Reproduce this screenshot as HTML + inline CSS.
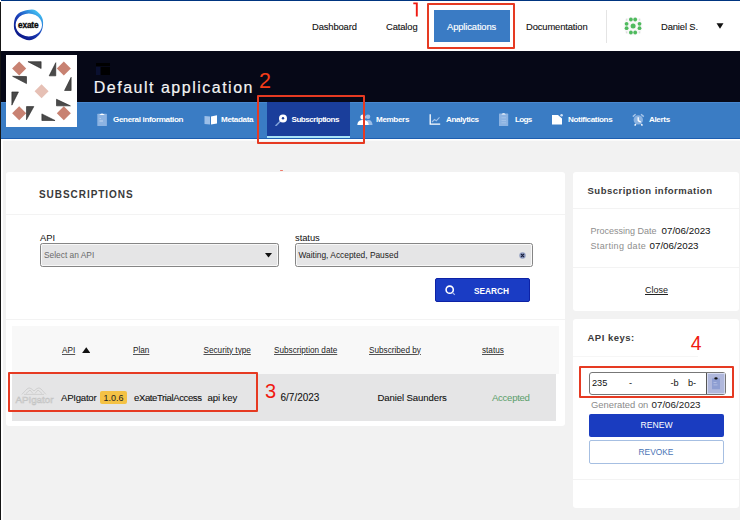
<!DOCTYPE html>
<html><head><meta charset="utf-8">
<style>
*{box-sizing:border-box;margin:0;padding:0}
html,body{width:740px;height:520px;overflow:hidden;background:#f2f2f2;font-family:"Liberation Sans",sans-serif;color:#222}
.a{position:absolute;white-space:nowrap}
#hdr{position:absolute;left:0;top:0;width:740px;height:51px;background:#fff}
#topline{position:absolute;left:1px;top:0;width:739px;height:1.4px;background:#003580}
#leftline{position:absolute;left:0;top:2px;width:1.2px;height:518px;background:#151515;z-index:7}
#band{position:absolute;left:0;top:51px;width:740px;height:51px;background:#060817}
#nav{position:absolute;left:0;top:102px;width:740px;height:36.8px;background:#3a7cc4;border-top:1px solid #4888d0;border-bottom:1.5px solid #1d5eb0;box-shadow:0 1.6px 0 #fff}
.hn{font-size:9.4px;color:#111;top:21px;letter-spacing:-0.12px;-webkit-text-stroke:0.1px #111}
.nv{font-size:8.1px;font-weight:bold;color:#fff;top:114.8px;letter-spacing:-0.36px}
.card{position:absolute;background:#fff;border-radius:3px}
.red{position:absolute;border:2px solid #e63a22;border-radius:1px;}
.rednum{position:absolute;color:#f01a10;font-size:21px;line-height:1}
.lbl{font-size:9.4px;color:#111;letter-spacing:-0.05px}
.th{font-size:8.2px;color:#222;text-decoration:underline;text-decoration-color:#555;top:345.6px}
.td{font-size:9.6px;color:#111;top:391.5px;letter-spacing:-0.12px;-webkit-text-stroke:0.08px #111}
</style></head><body>
<div id="hdr"></div>
<div id="topline"></div>

<!-- logo -->
<svg class="a" style="left:0;top:0" width="60" height="50" viewBox="0 0 60 50">
  <defs><linearGradient id="lg" x1="0.15" y1="0.9" x2="0.8" y2="0.05">
    <stop offset="0" stop-color="#0a1585"/><stop offset="0.5" stop-color="#1c3fb8"/><stop offset="0.8" stop-color="#2f8ee0"/><stop offset="1" stop-color="#46c4f2"/></linearGradient></defs>
  <path fill-rule="evenodd" fill="url(#lg)" d="M31.9 9.4 C35 9.4 37 11 39 13.2 C41.5 15.5 43 18.5 43.1 22 C43.2 26 42.5 30 40.3 33.2 C38 36.5 34 40 29.5 40.2 C26 40.3 23.5 39 21 37.6 C18 36 15.5 33.5 14.2 29 C13.6 25.5 13.8 21.5 15 18 C16.5 14.5 19 12.5 23 11.2 C26 10.2 29 9.4 31.9 9.4 Z M28.8 13.4 A13.2 11.5 0 1 0 28.81 13.4 Z"/>
  <text x="28.2" y="27.8" font-family="Liberation Sans" font-size="8.3" font-weight="bold" text-anchor="middle" fill="#0a0a0a" stroke="#0a0a0a" stroke-width="0.35" letter-spacing="-0.2">exate</text>
</svg>

<div class="a hn" style="left:312px">Dashboard</div>
<div class="a hn" style="left:386px">Catalog</div>
<div class="a" style="left:434px;top:10px;width:76px;height:32px;background:#3a7bc4"></div>
<div class="a hn" style="left:447px;color:#fff;-webkit-text-stroke:0.15px #fff">Applications</div>
<div class="a hn" style="left:526px">Documentation</div>
<div class="a" style="left:606px;top:10px;width:1px;height:33px;background:#e4e4e4"></div>
<!-- green avatar -->
<svg class="a" style="left:623px;top:16px" width="20" height="20" viewBox="0 0 20 20">
  <circle cx="10" cy="10" r="9.5" fill="#f8f8f8"/><g fill="#dcdcdc"><rect x="2.8" y="2.6" width="1.5" height="2"/><rect x="15.8" y="2.6" width="1.5" height="2"/><rect x="2.8" y="15.4" width="1.5" height="2"/><rect x="15.8" y="15.4" width="1.5" height="2"/></g>
  <g fill="#4fba5e">
    <circle cx="10.1" cy="10" r="2.5"/>
    <circle cx="7.9" cy="3.5" r="1.9"/><circle cx="12.2" cy="3.5" r="1.9"/>
    <circle cx="7.9" cy="16.5" r="1.9"/><circle cx="12.2" cy="16.5" r="1.9"/>
    <circle cx="3.6" cy="7.8" r="1.9"/><circle cx="3.6" cy="12.2" r="1.9"/>
    <circle cx="16.5" cy="7.8" r="1.9"/><circle cx="16.5" cy="12.2" r="1.9"/>
  </g>
</svg>
<div class="a hn" style="left:661px">Daniel S.</div>
<svg class="a" style="left:716px;top:23px" width="8" height="6" viewBox="0 0 8 6"><path d="M0.5 0.3H7.5L4 5.7Z" fill="#111"/></svg>
<div class="red" style="left:426.9px;top:2.5px;width:88.3px;height:46.6px"></div>
<svg class="a" style="left:0;top:0;z-index:6" width="430" height="20"><path d="M413.3 3.4 H416.8 V16.5" fill="none" stroke="#ef1a12" stroke-width="1.9"/></svg>

<div id="band"></div>
<!-- avatar identicon -->
<svg class="a" style="left:6px;top:55px;z-index:5" width="71" height="72" viewBox="15 15 485 487">
  <rect x="0" y="0" width="520" height="520" fill="#fff"/>
  <g fill="#c88272">
    <path d="M105 57 L153 105 L105 153 L57 105Z"/>
    <path d="M410 57 L458 105 L410 153 L362 105Z"/>
    <path d="M105 362 L153 410 L105 458 L57 410Z"/>
    <path d="M410 362 L458 410 L410 458 L362 410Z"/>
  </g>
  <path d="M258 212 L306 260 L258 308 L210 260Z" fill="#e6c0b5"/>
  <g fill="#4a4a4a" stroke="#222" stroke-width="4" stroke-linejoin="round">
    <path d="M165 58 L255 58 L255 105Z"/>
    <path d="M355 65 L355 155 L310 155Z"/>
    <path d="M60 158 L155 160 L155 208Z"/>
    <path d="M460 165 L460 255 L415 255Z"/>
    <path d="M55 265 L100 265 L55 355Z"/>
    <path d="M360 315 L360 360 L455 360Z"/>
    <path d="M155 365 L205 365 L155 455Z"/>
    <path d="M260 415 L260 460 L350 460Z"/>
  </g>
</svg>
<!-- broken image icon -->
<div class="a" style="left:96px;top:63px;width:14px;height:3px;background:#000"></div>
<div class="a" style="left:96px;top:67px;width:4px;height:8px;background:#0a1030"></div>
<div class="a" style="left:101px;top:67px;width:9px;height:8px;background:#000"></div>
<div class="a" style="left:93.8px;top:79px;font-size:16px;color:#f4f4f4;letter-spacing:1.5px;-webkit-text-stroke:0.18px #f4f4f4">Default application</div>
<div class="rednum" style="left:259px;top:70.7px;font-size:21.5px;color:#f33c18">2</div>

<div id="nav"></div>
<div class="a" style="left:267px;top:102px;width:83px;height:35px;background:#1a3e9b"></div>
<div class="a" style="left:267px;top:136px;width:83px;height:2px;background:#a9e2f7"></div>
<!-- nav icons -->
<svg class="a" style="left:97px;top:112px" width="11" height="15" viewBox="0 0 11 15">
  <rect x="0.3" y="1.7" width="9.6" height="12.3" rx="0.6" fill="#8cb3e2"/>
  <path d="M2.2 3 Q5 0 7.8 3Z" fill="#fff"/>
  <rect x="2.5" y="6" width="1.5" height="0.8" fill="#b8d0ee"/><rect x="2.5" y="8.6" width="3.5" height="0.8" fill="#d0e0f4"/>
</svg>
<div class="a nv" style="left:113px">General information</div>
<svg class="a" style="left:204px;top:115px" width="14" height="10" viewBox="0 0 14 10">
  <path d="M0.5 1 L6 1.5 L6 9.5 L0.5 9Z" fill="#9cbfe8"/>
  <path d="M7 1.5 L13 0.3 L13 8.5 L7 9.5Z" fill="#fff"/>
</svg>
<div class="a nv" style="left:221px">Metadata</div>
<svg class="a" style="left:275px;top:114px" width="13" height="12" viewBox="0 0 13 12">
  <path d="M1 11.5 L5 7.5" stroke="#7fa0d8" stroke-width="1.6" stroke-linecap="round"/>
  <circle cx="8" cy="4.5" r="4" fill="#fff"/>
  <circle cx="8" cy="4.3" r="1.2" fill="#1a3e9b"/>
</svg>
<div class="a nv" style="left:291.5px;letter-spacing:-0.5px">Subscriptions</div>
<svg class="a" style="left:357px;top:114px" width="16" height="11" viewBox="0 0 16 11">
  <circle cx="11" cy="2.8" r="2.3" fill="#9cbfe8"/>
  <path d="M8 11 C8 7 10 6 11.5 6 C14 6 15.5 8 15.5 11Z" fill="#9cbfe8"/>
  <circle cx="6" cy="3" r="2.6" fill="#fff"/>
  <path d="M0.3 11 C0.5 7 3 6 6 6 C9 6 11.5 7 11.7 11Z" fill="#fff"/>
</svg>
<div class="a nv" style="left:376px">Members</div>
<svg class="a" style="left:429px;top:114px" width="12" height="11" viewBox="0 0 12 11">
  <path d="M1.2 0.3 V10.2 H11.2" fill="none" stroke="#fff" stroke-width="1.3"/>
  <path d="M3 8 L5.5 5.5 L7.3 6.8 L10.5 3.3" fill="none" stroke="#9fc0e8" stroke-width="1.1"/>
</svg>
<div class="a nv" style="left:446px">Analytics</div>
<svg class="a" style="left:499px;top:112px" width="10" height="15" viewBox="0 0 10 15">
  <rect x="0" y="1.6" width="9.2" height="12.4" rx="0.6" fill="#8cb3e2"/>
  <path d="M2.4 2.6 Q4.6 -0.2 6.8 2.6Z" fill="#fff"/>
  <rect x="2.5" y="5.5" width="4.5" height="0.7" fill="#aac7ec"/><rect x="2.5" y="8" width="4.5" height="0.7" fill="#aac7ec"/><rect x="2.5" y="10.5" width="4.5" height="0.7" fill="#aac7ec"/>
</svg>
<div class="a nv" style="left:515px;letter-spacing:-0.7px">Logs</div>
<svg class="a" style="left:551px;top:113px" width="13" height="13" viewBox="0 0 13 13">
  <path d="M1 2 H7 L11 5.6 V11.6 H1Z" fill="#fff"/>
  <circle cx="10.6" cy="2.3" r="1.3" fill="#cfe0f5"/>
</svg>
<div class="a nv" style="left:568px">Notifications</div>
<svg class="a" style="left:631px;top:112px" width="14" height="15" viewBox="0 0 14 15">
  <circle cx="7.3" cy="7.9" r="4.7" fill="#8ab2e1"/>
  <path d="M7.2 5.3 V8.6 L9.8 10.1" stroke="#fff" stroke-width="1.3" fill="none" stroke-linejoin="round"/>
  <path d="M1.8 4.6 L4.6 2.3 M10 2.3 L12.8 4.6" stroke="#a8c6ea" stroke-width="1.4"/>
  <path d="M3.6 13.6 L4.9 12.2 M10.2 12.2 L11.5 13.6" stroke="#fff" stroke-width="1.5"/>
</svg>
<div class="a nv" style="left:649px">Alerts</div>
<div class="red" style="left:256.5px;top:95px;width:108.3px;height:49.4px"></div>

<div id="leftline"></div>
<div class="a" style="left:1px;top:138.5px;width:2px;height:382px;background:#fff"></div>

<!-- LEFT CARD -->
<div class="card" style="left:6px;top:172px;width:559px;height:254px"></div>
<div class="a" style="left:39px;top:188.5px;font-size:10px;font-weight:bold;color:#3a3a3a;letter-spacing:0.95px">SUBSCRIPTIONS</div>
<div class="a" style="left:6px;top:214px;width:559px;height:1px;background:#f3f3f3"></div>
<div class="a lbl" style="left:40px;top:232px">API</div>
<div class="a" style="left:40px;top:243px;width:239px;height:24px;background:#e5e5e6;border:1px solid #858585;border-radius:2.5px;box-shadow:inset 0 0 0 1px #f8f8f8"></div>
<div class="a" style="left:44px;top:250px;font-size:8.4px;color:#6a6a6a">Select an API</div>
<svg class="a" style="left:265px;top:253px" width="7" height="5" viewBox="0 0 7 5"><path d="M0 0H7L3.5 4.5Z" fill="#111"/></svg>
<div class="a lbl" style="left:295px;top:232px">status</div>
<div class="a" style="left:295px;top:243px;width:238px;height:24px;background:#e5e5e6;border:1px solid #858585;border-radius:2.5px;box-shadow:inset 0 0 0 1px #f8f8f8"></div>
<div class="a" style="left:298.5px;top:250px;font-size:8.4px;color:#222">Waiting, Accepted, Paused</div>
<svg class="a" style="left:519px;top:252px" width="7" height="7" viewBox="0 0 7 7"><circle cx="3.5" cy="3.5" r="3.2" fill="#8f9cc0"/><path d="M2 2L5 5M5 2L2 5" stroke="#1b2240" stroke-width="1.1"/></svg>
<div class="a" style="left:435px;top:278px;width:95px;height:24px;background:#1a3cc4;border:1px solid #0d22a6;border-radius:2px"></div>
<svg class="a" style="left:445px;top:285px" width="11" height="11" viewBox="0 0 11 11"><circle cx="4.7" cy="4.7" r="3.6" fill="none" stroke="#fff" stroke-width="1.6"/><path d="M7.5 7.5L9.8 9.8" stroke="#a9b8ee" stroke-width="1.2"/></svg>
<div class="a" style="left:474px;top:285.5px;font-size:8.3px;font-weight:bold;color:#fff">SEARCH</div>
<div class="a" style="left:6px;top:319px;width:559px;height:1px;background:#f3f3f3"></div>

<!-- table -->
<div class="a" style="left:12px;top:326px;width:546.5px;height:48px;background:#f8f8f8"></div>
<div class="a" style="left:12px;top:374px;width:544px;height:47px;background:#e5e5e6"></div>
<div class="a th" style="left:62px">API</div>
<svg class="a" style="left:81.7px;top:347px" width="8.5" height="6.2" viewBox="0 0 8.5 6.2"><path d="M4.25 0.2L8.4 6H0.1Z" fill="#111"/></svg>
<div class="a th" style="left:133px">Plan</div>
<div class="a th" style="left:203.5px">Security type</div>
<div class="a th" style="left:274px">Subscription date</div>
<div class="a th" style="left:369px">Subscribed by</div>
<div class="a th" style="left:482px">status</div>

<!-- APIgator logo -->
<svg class="a" style="left:14px;top:385px" width="42" height="23" viewBox="0 0 42 23">
  <g fill="none" stroke="#c9c9c9" stroke-width="0.8" stroke-linejoin="round">
    <path d="M7.9 9.4 L13 4 Q15 2 17 3.5 L20 6 L23 3.5 Q25 2 27 4 L31.9 9.4"/>
    <path d="M12 8.5 L16 5 L19 8.5 M21 8.5 L24 5 L28 8.5 M10 9.4 H30"/>
  </g>
  <text x="1.4" y="17.8" textLength="38" lengthAdjust="spacingAndGlyphs" font-family="Liberation Sans" font-size="9" fill="#ececed" stroke="#c4c4c4" stroke-width="0.55">APIgator</text>
</svg>
<div class="a td" style="left:61px;letter-spacing:-0.25px">APIgator</div>
<div class="a" style="left:99.5px;top:391px;width:27.5px;height:13px;background:#f4c245;border-radius:2px"></div>
<div class="a" style="left:103.5px;top:393px;font-size:9px;color:#222">1.0.6</div>
<div class="a td" style="left:134px;letter-spacing:-0.42px">eXateTrialAccess</div>
<div class="a td" style="left:207.5px">api key</div>
<div class="a td" style="left:280.5px;font-size:10px;letter-spacing:0">6/7/2023</div>
<div class="a td" style="left:377.5px">Daniel Saunders</div>
<div class="a td" style="left:492px;color:#5a9e6a;-webkit-text-stroke:0;letter-spacing:-0.3px">Accepted</div>
<div class="red" style="left:7.6px;top:372.3px;width:250.4px;height:39.6px"></div>
<div class="rednum" style="left:265px;top:381px;font-size:20px">3</div>

<!-- RIGHT CARD 1 -->
<div class="card" style="left:573px;top:172px;width:166px;height:139px"></div>
<div class="a" style="left:587.5px;top:185px;font-size:9.5px;font-weight:bold;color:#3a3a3a;letter-spacing:0.5px">Subscription information</div>
<div class="a" style="left:573px;top:208px;width:166px;height:1px;background:#f3f3f3"></div>
<div class="a" style="left:590.5px;top:226px;font-size:9px;color:#8e8e8e">Processing Date</div>
<div class="a" style="left:661.5px;top:225px;font-size:9.8px;color:#111">07/06/2023</div>
<div class="a" style="left:590.5px;top:241px;font-size:9px;color:#8e8e8e;letter-spacing:0.35px">Starting date</div>
<div class="a" style="left:649.5px;top:240px;font-size:9.8px;color:#111">07/06/2023</div>
<div class="a" style="left:573px;top:267px;width:166px;height:1px;background:#f3f3f3"></div>
<div class="a" style="left:645px;top:285px;font-size:9px;color:#222;text-decoration:underline">Close</div>

<!-- RIGHT CARD 2 -->
<div class="card" style="left:573px;top:319px;width:166px;height:189px"></div>
<div class="a" style="left:587.5px;top:332px;font-size:9.5px;font-weight:bold;color:#3a3a3a;letter-spacing:0.5px">API keys:</div>
<div class="a" style="left:573px;top:356px;width:125px;height:1px;background:#f6f6f6"></div>
<div class="rednum" style="left:690.8px;top:333.6px;font-size:19.4px">4</div>
<div class="a" style="left:589px;top:372px;width:137px;height:23px;background:#fff;border:1px solid #777;border-radius:3px"></div>
<div class="a" style="left:706px;top:373px;width:19px;height:21px;background:#b0b8dc;border-left:1px solid #555;box-shadow:inset 1px 1px 0 #d8ddf2,inset -1px -1px 0 #d0d6ee"></div>
<svg class="a" style="left:711px;top:376px" width="10" height="14" viewBox="0 0 10 14">
  <rect x="1" y="2.3" width="8" height="11" rx="0.5" fill="#8e9ed2"/>
  <ellipse cx="5" cy="2.4" rx="1.7" ry="1.1" fill="#111"/>
  <rect x="2.5" y="6" width="3" height="0.8" fill="#b8c2e6"/><rect x="2.5" y="8.5" width="4" height="0.8" fill="#b8c2e6"/>
</svg>
<div class="a" style="left:592px;top:378px;font-size:9.2px;color:#111">235</div>
<div class="a" style="left:629px;top:378px;font-size:9.2px;color:#111">-</div>
<div class="a" style="left:670.5px;top:378px;font-size:9.2px;color:#111">-b</div>
<div class="a" style="left:688px;top:378px;font-size:9.2px;color:#111">b-</div>
<div class="red" style="left:578.8px;top:365.5px;width:155.6px;height:32.6px"></div>
<div class="a" style="left:591px;top:399px;font-size:9.4px;color:#8a8a8a">Generated on</div>
<div class="a" style="left:651.5px;top:399px;font-size:9.8px;color:#1a1a1a">07/06/2023</div>
<div class="a" style="left:589px;top:414px;width:134.5px;height:23px;background:#1a3cc0;border-radius:2px"></div>
<div class="a" style="left:640.5px;top:420px;font-size:8.6px;color:#fff">RENEW</div>
<div class="a" style="left:589px;top:440px;width:134.5px;height:23.5px;background:#fff;border:1px solid #a6bfe2;border-radius:2px"></div>
<div class="a" style="left:638.5px;top:446.5px;font-size:8.4px;color:#4a74b6">REVOKE</div>
<div class="a" style="left:573px;top:479px;width:166px;height:1px;background:#f3f3f3"></div>

<div class="a" style="left:280px;top:169.5px;width:2.5px;height:1.5px;background:#f07a6a;border-radius:1px"></div>
</body></html>
